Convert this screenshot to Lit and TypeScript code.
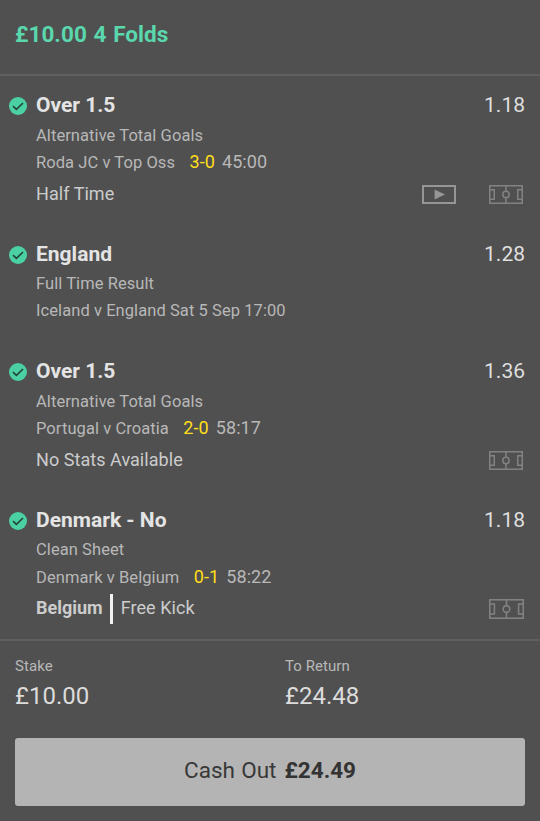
import { LitElement, html, css, svg, nothing } from "lit";
import { customElement, property } from "lit/decorators.js";

interface Selection {
  name: string;
  odds: string;
  market: string;
  fixture: string;
  score?: string;
  clock?: string;
  team?: string;
  status?: string;
  video?: boolean;
}

const selections: Selection[] = [
  { name: "Over 1.5", odds: "1.18", market: "Alternative Total Goals", fixture: "Roda JC v Top Oss", score: "3-0", clock: "45:00", status: "Half Time", video: true },
  { name: "England", odds: "1.28", market: "Full Time Result", fixture: "Iceland v England Sat 5 Sep 17:00" },
  { name: "Over 1.5", odds: "1.36", market: "Alternative Total Goals", fixture: "Portugal v Croatia", score: "2-0", clock: "58:17", status: "No Stats Available" },
  { name: "Denmark - No", odds: "1.18", market: "Clean Sheet", fixture: "Denmark v Belgium", score: "0-1", clock: "58:22", team: "Belgium", status: "Free Kick" },
];

const tick = html`<svg class="tick" viewBox="0 0 18 18" width="18" height="18">
  <circle cx="9" cy="9" r="9" fill="#4bd0a4" />
  <path d="M4 9.2 7.4 12.4 14 6" fill="none" stroke="#234339" stroke-width="1.6" />
</svg>`;

const videoIcon = html`<svg viewBox="0 0 34 19" width="34" height="19">
  <rect x="1" y="1" width="32" height="17" fill="none" stroke="#969696" stroke-width="2" />
  <path d="M12.6 4.4 23 9.5 12.6 14.6Z" fill="#969696" />
</svg>`;

const pitchLines = svg`<g fill="none" stroke="#828282" stroke-width="1.5">
  <rect x=".75" y=".75" width="32.5" height="17.5" />
  <path d="M17 1V6M17 13V18M1 4.75H5.25V14.25H1M33 4.75H28.75V14.25H33" />
  <circle cx="17" cy="9.5" r="3.2" />
</g>`;

const pitchIcon = html`<svg class="pitch" viewBox="0 0 34 19" preserveAspectRatio="none">${pitchLines}</svg>`;

@customElement("bet-selection")
export class BetSelection extends LitElement {
  @property({ attribute: false }) selection!: Selection;

  static styles = css`
    :host { display: block; }
    svg { display: block; flex: none; }
    .item { display: grid; grid-template-columns: 27px 1fr; padding: 0 15px 0 9px; }
    .tick { margin-top: 8px; }
    .head { display: flex; justify-content: space-between; height: var(--head-height, 33px); font-size: 21px; line-height: 33px; color: #dfdfdf; }
    .name { font-weight: 700; color: #e4e4e4; }
    .market, .fixture { font-size: 16.5px; line-height: 27px; letter-spacing: 0.07px; color: #b8b8b8; }
    .market { height: calc(59px - var(--head-height, 33px)); }
    .fixture { display: flex; align-items: baseline; height: 28px; }
    .score { font-size: 18px; color: #ffdf1b; margin-left: 14.5px; }
    .clock { font-size: 18px; color: #b8b8b8; margin-left: 7px; }
    .live { display: flex; align-items: center; height: 28px; margin-top: 4px; font-size: 18px; line-height: 28px; letter-spacing: 0.05px; color: #cccccc; }
    .live.attack { margin-top: 3px; padding-bottom: 1px; }
    .team { font-weight: 700; letter-spacing: 0; }
    .bar { width: 3px; height: 30px; background: #f2f2f2; margin: 2px 8px 0 7px; flex: none; }
    .pitch { width: 34px; height: 19px; }
    .attack .icons { padding: 2px 1px 0 0; }
    .attack .pitch { width: 35px; height: 20px; }
    .icons { display: flex; gap: 33px; margin-left: auto; padding-right: 2px; }
  `;

  render() {
    const s = this.selection;
    return html`<div class="item">
      ${tick}
      <div>
        <div class="head"><span class="name">${s.name}</span><span>${s.odds}</span></div>
        <div class="market">${s.market}</div>
        <div class="fixture">
          <span>${s.fixture}</span>
          ${s.score ? html`<span class="score">${s.score}</span><span class="clock">${s.clock}</span>` : nothing}
        </div>
        ${s.status
          ? html`<div class="live ${s.team ? "attack" : ""}">
              ${s.team ? html`<span class="team">${s.team}</span><span class="bar"></span>` : nothing}
              <span>${s.status}</span>
              <div class="icons">${s.video ? videoIcon : nothing}${pitchIcon}</div>
            </div>`
          : nothing}
      </div>
    </div>`;
  }
}

@customElement("app-root")
export class AppRoot extends LitElement {
  static styles = css`
    :host { display: block; height: 821px; overflow: hidden; background: #505050; font-family: Roboto, "Liberation Sans", sans-serif; }
    .header { box-sizing: border-box; height: 76px; padding: 18px 15px 0; border-bottom: 2px solid #5f5f5f; font-size: 22.5px; line-height: 32px; letter-spacing: 0.06px; word-spacing: 1px; font-weight: 700; color: #5ad7ac; }
    .list { box-sizing: border-box; height: 565px; display: flex; flex-direction: column; gap: 30px; padding-top: 13px; border-bottom: 2px solid #5f5f5f; }
    bet-selection:nth-child(even) { --head-height: 32px; }
    .totals { display: grid; grid-template-columns: 1fr 1fr; height: 97px; box-sizing: border-box; padding: 14px 0 0 15px; column-gap: 15px; }
    .label { font-size: 15px; line-height: 22px; letter-spacing: 0.07px; color: #b8b8b8; }
    .value { font-size: 24px; line-height: 38px; color: #dcdcdc; }
    .cashout { display: flex; align-items: center; justify-content: center; gap: 8px; width: 510px; height: 68px; margin: 0 15px; padding: 0 0 4px; border: 0; border-radius: 3px; background: #b4b4b4; color: #383838; font: 22.5px Roboto, "Liberation Sans", sans-serif; word-spacing: 0.7px; }
    .amount { font-weight: 700; color: #333333; }
  `;

  render() {
    return html`
      <div class="header">£10.00 4 Folds</div>
      <div class="list">${selections.map((s) => html`<bet-selection .selection=${s}></bet-selection>`)}</div>
      <div class="totals">
        <div><div class="label">Stake</div><div class="value">£10.00</div></div>
        <div><div class="label">To Return</div><div class="value">£24.48</div></div>
      </div>
      <button class="cashout"><span>Cash Out</span><span class="amount">£24.49</span></button>
    `;
  }
}
